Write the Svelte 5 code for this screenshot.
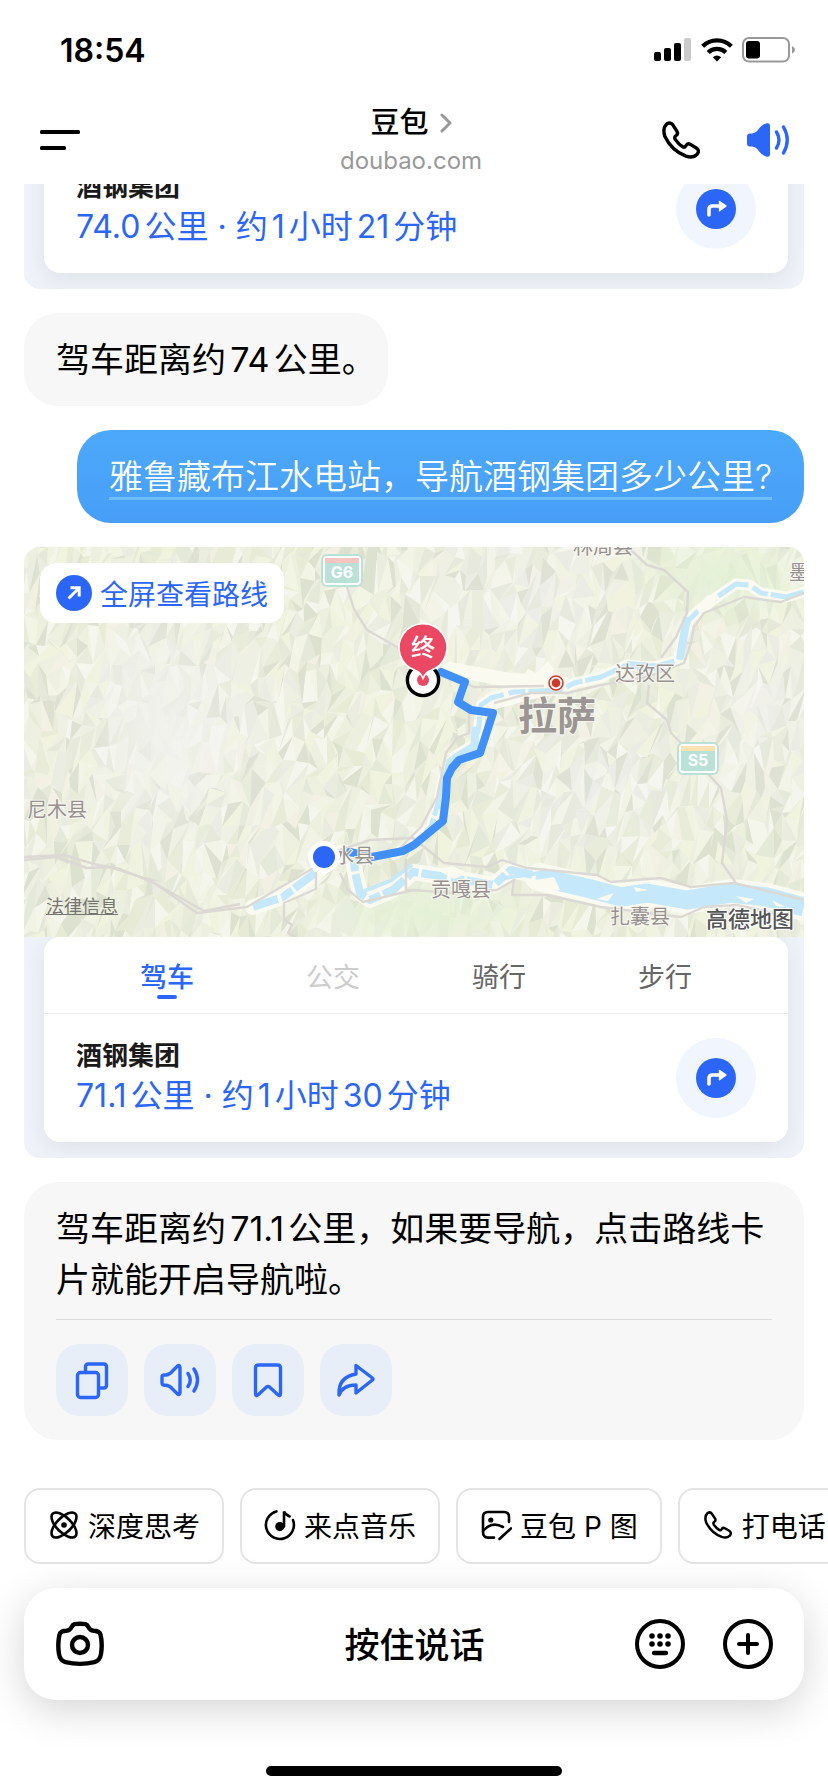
<script lang="ts">
  const tabs = [
    { name: '驾车', state: 'active' },
    { name: '公交', state: 'disabled' },
    { name: '骑行', state: '' },
    { name: '步行', state: '' },
  ];

  const chips = [
    { icon: 'atom', label: '深度思考' },
    { icon: 'music', label: '来点音乐' },
    { icon: 'photo', label: '豆包 P 图' },
    { icon: 'phone', label: '打电话' },
  ];

  const places = [
    { name: '林周县', x: 549, y: 7 },
    { name: '墨', x: 765, y: 33 },
    { name: '达孜区', x: 591, y: 134 },
    { name: '尼木县', x: 3, y: 270 },
    { name: '水县', x: 310, y: 316 },
    { name: '贡嘎县', x: 407, y: 350 },
    { name: '扎囊县', x: 586, y: 377 },
  ];

  const shields = [
    { code: 'G6', x: 297, y: 7, band: '#f6c5c1' },
    { code: 'S5', x: 653, y: 195, band: '#fae3b0' },
  ];

  const roads = [
    'M0 313L33 310L63 321L86 320L126 333L173 366L223 360L286 323L316 303L346 293L389 291L420 316L463 320L478 313L503 321L573 328L587 335L637 331L667 340L710 336L780 353',
    'M0 310L40 308L70 317L96 322L130 336L180 364L216 357',
    'M625 138L623 156L643 173L647 186L667 206L687 230L697 241L703 273L698 316L712 336',
    'M607 3L623 18L640 23L664 45L663 66L652 90L637 111',
    'M780 46L757 55L720 50L680 66L670 80L667 96L660 116L623 130L577 138L543 146L507 146L470 156',
    'M417 125L450 140L520 139',
    'M323 40L330 62L343 83L373 100L385 118',
    'M445 160L445 186L433 191L422 206L413 250L397 280L375 302',
    'M316 326L324 343L339 355L389 343L430 346L473 343L490 333L488 348L523 348L577 360L657 370L680 360L713 358L750 366',
    'M292 325L292 342L260 356L260 372L268 378L264 386L272 390',
    'M382 312L382 343L392 343',
  ];

  const lhasaRiver =
    'M780 45L762 50L737 46L725 38L712 37L693 50L673 65L665 73L657 96L655 113L630 120L603 118L577 130L550 136L537 143L490 145L467 151L457 158L455 178L452 196L430 210L420 230L415 253L407 280L390 296L370 308';
  const westRiver =
    'M229 360L259 350L275 338L291 326L316 306L329 306L331 325L336 346L346 353L369 343L389 325L423 330L470 338L487 323L523 331';
  const eastRiver = 'M515 330L563 341L597 350L623 346L663 353L707 346L743 350L780 360';

  // Relief: a jittered grid of facets, grouped by shade so each shade is one path
  const shades = ['#ffffff', '#f9faed', '#e0e6cc', '#dadfcf', '#c6cbba', '#f5f8dd', '#e6e8e4', '#fbf1e9'];

  function buildRelief() {
    let seed = 7;
    const rand = () => {
      seed = (seed * 16807) % 2147483647;
      return seed / 2147483647;
    };
    const cols = 88;
    const rows = 24;
    const pts: number[][][] = [];
    for (let r = 0; r <= rows; r++) {
      pts.push([]);
      for (let c = 0; c <= cols; c++) {
        const x = (c - 1) * 9.2 + (rand() - 0.5) * 11 + (r % 2) * 5;
        const y = (r - 1) * 18 + (rand() - 0.5) * 26;
        pts[r].push([Math.round(x), Math.round(y)]);
      }
    }
    const out = shades.map(() => '');
    for (let r = 0; r < rows; r++) {
      for (let c = 0; c < cols; c++) {
        const [a, b, d, e] = [pts[r][c], pts[r][c + 1], pts[r + 1][c], pts[r + 1][c + 1]];
        for (const tri of [[a, b, d], [b, e, d]]) {
          const roll = rand();
          if (roll < 0.2) continue;
          const idx = roll > 0.97 ? 7 : Math.floor(rand() * 7);
          out[idx] += `M${tri.map((p) => p.join(' ')).join('L')}Z`;
        }
      }
    }
    return out;
  }

  const relief = buildRelief();
</script>

{#snippet phoneIcon()}
  <svg class="phone" viewBox="0 0 38 38" fill="none" stroke="currentColor" stroke-width="3.4" stroke-linejoin="round" aria-hidden="true">
    <path d="M5 2.8Q8.5 .6 10.8 3.8L15 10.4Q16.4 12.8 14.2 14.4Q11.8 16 13.4 18.6Q16.4 23 21 26Q22.6 26.8 23.8 24.8Q25.6 21.8 28.4 23.4L34.6 27.2Q38 29.6 35 33.4Q31 37.6 24 35.2Q9.6 29.6 2.8 15.2Q.2 7 5 2.8Z" />
  </svg>
{/snippet}

{#snippet routeRow(distance: string, duration: string)}
  <div class="route-row">
    <div class="route-text">
      <strong>酒钢集团</strong>
      <span>{distance} · {duration}</span>
    </div>
    <button class="go" aria-label="开始导航">
      <svg viewBox="0 0 40 40" aria-hidden="true">
        <circle cx="20" cy="20" r="20" fill="#2b66f6" />
        <path d="M13 26V20.5Q13 17 16.5 17H24" fill="none" stroke="#fff" stroke-width="3.6" stroke-linecap="round" />
        <path d="M23.6 11.8L30.2 16.2Q31.2 17 30.2 17.8L23.6 22.4Q22.8 22.8 22.8 21.8V12.4Q22.8 11.4 23.6 11.8Z" fill="#fff" />
      </svg>
    </button>
  </div>
{/snippet}

<div class="screen">
  <div class="status-bar">
    <time>18:54</time>
    <div class="status-icons">
      <svg width="38" height="24" viewBox="0 0 38 24" aria-hidden="true">
        <rect x="0" y="14" width="7" height="9" rx="2" />
        <rect x="10" y="10" width="7" height="13" rx="2" />
        <rect x="20" y="5" width="7" height="18" rx="2" />
        <rect x="30" y="0" width="7" height="23" rx="2" fill="#cbcbcb" />
      </svg>
      <svg width="32" height="24" viewBox="0 0 32 24" fill="none" stroke="#000" stroke-width="4.2" aria-hidden="true">
        <path d="M1.6 8.3C9.6.3 22.4.3 30.4 8.3" />
        <path d="M7.2 14.4C12 9.6 20 9.6 24.8 14.4" />
        <path d="M16 23.4L11.8 19.2Q16 15.8 20.2 19.2Z" fill="#000" stroke="none" />
      </svg>
      <svg width="54" height="26" viewBox="0 0 54 26" aria-hidden="true">
        <rect x="1" y="1" width="46" height="23.6" rx="6" fill="none" stroke="#999" stroke-width="2" />
        <rect x="4" y="4" width="14" height="17.4" rx="3" />
        <path d="M50 9Q53 10.4 53 12.8T50 16.8Z" fill="#999" />
      </svg>
    </div>
  </div>

  <header>
    <button class="icon-btn" aria-label="菜单">
      <svg width="40" height="20" viewBox="0 0 40 20" aria-hidden="true">
        <rect width="40" height="4" rx="1.6" />
        <rect y="16" width="26" height="4" rx="1.6" />
      </svg>
    </button>
    <div class="title">
      <h1>
        豆包
        <svg width="12" height="20" viewBox="0 0 12 20" fill="none" stroke="#999" stroke-width="3" stroke-linecap="round" stroke-linejoin="round" aria-hidden="true">
          <path d="M2 2L10 10L2 18" />
        </svg>
      </h1>
      <p>doubao.com</p>
    </div>
    <div class="header-actions">
      <button class="icon-btn" aria-label="打电话">{@render phoneIcon()}</button>
      <button class="icon-btn speaker" aria-label="朗读">
        <svg width="44" height="36" viewBox="0 0 44 36" aria-hidden="true">
          <path d="M3.5 11.5H6Q10 11 13 6.5Q16 2.5 20 1.4Q24 .4 24 4V32Q24 35.6 20 34.4Q16 33 13 29.2Q10 25 6 24.6H3.5Q1 24.4 1 22V14Q1 11.6 3.5 11.5Z" fill="currentColor" />
          <path d="M30.5 10Q35.5 18 30.5 26M37.5 5Q45 18 37.5 31" fill="none" stroke="currentColor" stroke-width="3.4" stroke-linecap="round" />
        </svg>
      </button>
    </div>
  </header>

  <main>
    <section class="route">
      <div class="route-card">{@render routeRow('74.0公里', '约1小时21分钟')}</div>
    </section>

    <div class="bubble bot short"><p>驾车距离约74公里。</p></div>

    <div class="bubble user"><p>雅鲁藏布江水电站，导航酒钢集团多少公里?</p></div>

    <section class="route">
      <div class="map">
        <svg class="terrain" viewBox="0 0 780 390" preserveAspectRatio="xMidYMid slice" role="img" aria-label="路线地图">
          <defs>
            <radialGradient id="haze">
              <stop offset="0" stop-color="#f1f2ed" stop-opacity=".9" />
              <stop offset="1" stop-color="#f1f2ed" stop-opacity="0" />
            </radialGradient>
            <radialGradient id="meadow">
              <stop offset="0" stop-color="#e4f2d6" stop-opacity=".9" />
              <stop offset="1" stop-color="#e4f2d6" stop-opacity="0" />
            </radialGradient>
          </defs>
          <rect width="780" height="390" fill="#edf0de" />
          <ellipse cx="150" cy="190" rx="170" ry="190" fill="url(#haze)" />
          <ellipse cx="500" cy="50" rx="150" ry="100" fill="url(#haze)" />
          <ellipse cx="570" cy="245" rx="150" ry="100" fill="url(#haze)" />
          <ellipse cx="740" cy="170" rx="90" ry="120" fill="url(#haze)" />
          <g opacity=".4">
            {#each relief as d, i}
              <path {d} fill={shades[i]} />
            {/each}
          </g>
          <ellipse cx="140" cy="180" rx="80" ry="120" fill="url(#haze)" />
          <ellipse cx="700" cy="30" rx="100" ry="50" fill="url(#meadow)" />
          <ellipse cx="400" cy="365" rx="120" ry="40" fill="url(#meadow)" />

          <g fill="none" stroke="#fafaf0" stroke-linejoin="round" stroke-linecap="round">
            <path d={lhasaRiver} stroke-width="11" />
            <path d="M425 122L480 132L540 137L490 150L460 158" stroke-width="14" />
            <path d={westRiver} stroke-width="16" />
            <path d={eastRiver} stroke-width="28" />
          </g>
          <path d="M498 130L504 122L512 126L524 114L530 122L526 138H498Z" fill="#fafaf0" />
          <g fill="none" stroke="#c5e8fa" stroke-linejoin="round">
            <path d={lhasaRiver} stroke-width="5" stroke-dasharray="34 3 17 5" />
            <path d="M663 70L656 112M603 118L640 121M452 180L450 200L426 215L415 262" stroke-width="8" />
            <path d={westRiver} stroke-width="8" stroke-dasharray="26 4 13 3" />
            <path d={eastRiver} stroke-width="19" />
            <path d="M340 344L366 334L388 318M480 331L530 324M700 344L770 365" stroke-width="4" />
          </g>
          <g fill="#fafaf0">
            <path d="M670 62L684 48L694 50L686 64Z" />
            <path d="M412 322L428 319L444 326L430 332Z" />
            <path d="M505 334L530 330L536 343L520 346Z" />
            <path d="M572 352L590 346L584 354Z" />
            <path d="M712 349L730 352L722 356Z" />
            <path d="M610 340L624 343L612 345Z" />
            <path d="M748 353L762 360L752 359Z" />
          </g>

          <g fill="none" stroke="#dcd9d5" stroke-width="2.4" stroke-linejoin="round">
            {#each roads as d}
              <path {d} />
            {/each}
          </g>

          {#each shields as s}
            <rect x={s.x} y={s.y} width="42" height="33" rx="6" fill="#b9e1d6" />
            <rect x={s.x + 3} y={s.y + 3} width="36" height="27" rx="3" fill="none" stroke="#fff" stroke-width="2" />
            <rect x={s.x + 4} y={s.y + 4} width="34" height="5" fill={s.band} />
            <text class="code" x={s.x + 21} y={s.y + 24}>{s.code}</text>
          {/each}

          <path
            d="M417 125L441 135L434 155L447 163L469 166L456 206L435 213L428 221L423 231L422 250L419 274L390 298L379 304L348 310L326 305"
            fill="none"
            stroke="#4190f7"
            stroke-width="8"
            stroke-linejoin="round"
            stroke-linecap="round"
          />

          {#each places as p}
            <text class="place" x={p.x} y={p.y}>{p.name}</text>
          {/each}
          <text class="city" x="494" y="183">拉萨</text>
          <text class="brand" x="682" y="380">高德地图</text>

          <circle cx="532" cy="136" r="8" fill="#fff" />
          <circle cx="532" cy="136" r="7" fill="none" stroke="#cd3a2a" stroke-width="1.6" />
          <circle cx="532" cy="136" r="4.4" fill="#cd3a2a" />

          <circle cx="300" cy="310" r="16" fill="#fff" />
          <circle cx="300" cy="310" r="11" fill="#2b66f6" />

          <circle cx="399" cy="133" r="15.6" fill="#fff" stroke="#000" stroke-width="3.4" />
          <circle cx="399" cy="133" r="6" fill="#eb4864" />
          <path d="M391.5 123.5Q396 124.6 399 131.5Q402 124.6 406.5 123.5A24 24 0 1 0 391.5 123.5Z" fill="#eb4864" stroke="#fff" stroke-width="1.6" />
          <text class="end" x="399" y="109">终</text>
        </svg>
        <button class="fullscreen">
          <svg width="36" height="36" viewBox="0 0 36 36" aria-hidden="true">
            <circle cx="18" cy="18" r="18" fill="#2b66f6" />
            <path d="M12.5 23.5L23 13M14.5 12.8H23.2V21.6" fill="none" stroke="#fff" stroke-width="3" />
          </svg>
          全屏查看路线
        </button>
        <a class="legal" href="#legal">法律信息</a>
      </div>
      <div class="route-card">
        <nav>
          {#each tabs as tab}
            <button class="tab {tab.state}" disabled={tab.state === 'disabled'}>{tab.name}</button>
          {/each}
        </nav>
        {@render routeRow('71.1公里', '约1小时30分钟')}
      </div>
    </section>

    <div class="bubble bot">
      <p>驾车距离约71.1公里，如果要导航，点击路线卡片就能开启导航啦。</p>
      <div class="actions">
        <button aria-label="复制">
          <svg viewBox="0 0 40 40" aria-hidden="true">
            <path d="M13.5 12.5V7Q13.5 4 16.5 4H31.5Q34.5 4 34.5 7V25Q34.5 28 31.5 28H27.5" />
            <rect x="5.5" y="12.5" width="21" height="25" rx="3" />
          </svg>
        </button>
        <button aria-label="朗读">
          <svg viewBox="0 0 40 40" aria-hidden="true">
            <path d="M4.5 15H6Q10 14.4 13 10.4L17.6 6Q20 4.4 20 8V32Q20 35.6 17.6 34L13 29.6Q10 25.6 6 25.2H4.5Q2 25 2 23V17Q2 15 4.5 15Z" />
            <path d="M28 13.5Q32.5 20 28 26.5M34 9Q41 20 34 31" />
          </svg>
        </button>
        <button aria-label="收藏">
          <svg viewBox="0 0 40 40" aria-hidden="true">
            <path d="M7.5 33V8Q7.5 5 10.5 5H29.5Q32.5 5 32.5 8V33Q32.5 37 29.6 34.4L22 27.4Q20 25.8 18 27.4L10.4 34.4Q7.5 37 7.5 33Z" />
          </svg>
        </button>
        <button aria-label="分享">
          <svg viewBox="0 0 40 40" aria-hidden="true">
            <path d="M20 5.5L36.4 18Q37.6 19 36.4 20L20 33V25Q7 25 3 35Q2 17 20 14Z" />
          </svg>
        </button>
      </div>
    </div>
  </main>

  <div class="chips">
    {#each chips as chip}
      <button class="chip">
        {#if chip.icon === 'phone'}
          {@render phoneIcon()}
        {:else}
          <svg width="32" height="32" viewBox="0 0 32 32" fill="none" stroke="currentColor" stroke-width="2.6" stroke-linecap="round" aria-hidden="true">
            {#if chip.icon === 'atom'}
              <ellipse cx="16" cy="16" rx="16" ry="7.4" transform="rotate(45 16 16)" />
              <ellipse cx="16" cy="16" rx="16" ry="7.4" transform="rotate(-45 16 16)" />
              <circle cx="16" cy="16" r="2.8" fill="currentColor" stroke="none" />
            {:else if chip.icon === 'music'}
              <path d="M12.4 2.4A14 14 0 1 0 29 11" />
              <path d="M20 17.5V2.6Q21.4 6 25.6 7.4" />
              <circle cx="15.8" cy="17.6" r="4.6" fill="currentColor" stroke="none" />
            {:else}
              <path d="M29 13V8Q29 3 24 3H8Q3 3 3 8V23Q3 28.6 8 28.6H14" />
              <path d="M4 21Q12 12 23 18M19.5 30L31 19.4" />
              <circle cx="10.8" cy="11" r="2.6" fill="currentColor" stroke="none" />
            {/if}
          </svg>
        {/if}
        {chip.label}
      </button>
    {/each}
  </div>

  <footer>
    <button class="icon-btn" aria-label="拍照">
      <svg width="48" height="46" viewBox="0 0 48 46" fill="none" stroke="#000" stroke-width="4.4" aria-hidden="true">
        <path d="M18.5 3.2Q24 2.2 29.5 3.2Q31.4 3.8 32.6 6.4Q34 9.4 37.6 9.8Q43.6 9.8 44.6 14Q46.6 23 45 33Q44 39.4 38.4 41.2Q24 44.6 9.6 41.2Q4 39.4 3 33Q1.4 23 3.4 14Q4.4 9.8 10.4 9.8Q14 9.4 15.4 6.4Q16.6 3.8 18.5 3.2Z" />
        <circle cx="24" cy="24" r="8" />
      </svg>
    </button>
    <button class="talk">按住说话</button>
    <div class="footer-actions">
      <button class="icon-btn" aria-label="键盘">
        <svg width="50" height="50" viewBox="0 0 50 50" aria-hidden="true">
          <circle cx="25" cy="25" r="23" fill="none" stroke="#000" stroke-width="4" />
          {#each [17, 25, 33] as x}
            <circle cx={x} cy="17" r="2.8" />
            <circle cx={x} cy="25" r="2.8" />
          {/each}
          <path d="M19 34H31" stroke="#000" stroke-width="4.4" stroke-linecap="round" />
        </svg>
      </button>
      <button class="icon-btn" aria-label="更多">
        <svg width="50" height="50" viewBox="0 0 50 50" fill="none" stroke="#000" stroke-width="4" stroke-linecap="round" aria-hidden="true">
          <circle cx="25" cy="25" r="23" />
          <path d="M16 25H34M25 16V34" />
        </svg>
      </button>
    </div>
  </footer>
  <div class="home-indicator"></div>
</div>

<style>
  :global(body) {
    margin: 0;
    background: #fff;
  }

  .screen {
    display: flex;
    flex-direction: column;
    height: 100vh;
    overflow: hidden;
    font-family: Inter, 'Noto Sans CJK SC', sans-serif;
    color: #000;
    background: #fff;
    text-autospace: normal;
  }

  button {
    padding: 0;
    border: 0;
    background: none;
    font: inherit;
    color: inherit;
  }

  p,
  h1 {
    margin: 0;
  }

  svg {
    display: block;
    flex: none;
  }

  .icon-btn {
    display: flex;
    align-items: center;
    justify-content: center;
  }

  .status-bar {
    display: flex;
    align-items: center;
    justify-content: space-between;
    flex: none;
    height: 96px;
    padding: 4px 32px 0 60px;
    box-sizing: border-box;
  }

  .status-bar time {
    font-size: 32px;
    font-weight: 600;
  }

  .status-icons {
    display: flex;
    align-items: center;
    gap: 9px;
  }

  header {
    display: grid;
    grid-template-columns: 1fr auto 1fr;
    align-items: center;
    flex: none;
    height: 88px;
    padding: 0 38px 0 40px;
  }

  header > .icon-btn {
    justify-self: start;
  }

  .title {
    padding-right: 8px;
    text-align: center;
  }

  .title h1 {
    display: flex;
    align-items: center;
    justify-content: center;
    gap: 11px;
    font-size: 29px;
    line-height: 42px;
    font-weight: 500;
  }

  .title p {
    font-size: 24px;
    line-height: 34px;
    color: #999;
  }

  .header-actions {
    display: flex;
    align-items: center;
    justify-content: flex-end;
    gap: 46px;
  }

  .header-actions .phone {
    width: 38px;
    height: 38px;
  }

  .speaker {
    color: #2b66f6;
  }

  /* Newest message sits at the bottom, older ones slide under the header */
  main {
    display: flex;
    flex-direction: column;
    justify-content: flex-end;
    flex: 1;
    min-height: 0;
    gap: 24px;
    padding: 0 24px;
    overflow: hidden;
  }

  .bubble {
    flex: none;
    padding: 21px 32px;
    border-radius: 34px;
    font-size: 34px;
    line-height: 51px;
  }

  .bot {
    background: #f7f7f7;
  }

  .short {
    align-self: flex-start;
    padding-right: 12px;
  }

  .user {
    align-self: flex-end;
    color: #fff;
    font-weight: 350;
    background: linear-gradient(#4ca9fa, #489ef7);
    text-decoration: underline 3px #6fbcfa;
    text-decoration-skip-ink: none;
    text-underline-offset: 8px;
  }

  .route {
    flex: none;
    border-radius: 16px;
    background: #eff2f9;
    overflow: hidden;
  }

  .map {
    position: relative;
    height: 390px;
  }

  .terrain {
    width: 100%;
    height: 100%;
  }

  .place {
    font-size: 20px;
    fill: #96918e;
    stroke: #f7f7f0;
    stroke-width: 2px;
    paint-order: stroke;
  }

  .city {
    font-size: 39px;
    font-weight: 700;
    fill: #9b9693;
    stroke: #f7f7f0;
    stroke-width: 2px;
    paint-order: stroke;
  }

  .brand {
    font-size: 22px;
    font-weight: 500;
    fill: #555;
    stroke: #fff;
    stroke-width: 2px;
    paint-order: stroke;
  }

  .code {
    font-size: 16px;
    font-weight: 700;
    fill: #fff;
    text-anchor: middle;
  }

  .end {
    font-size: 24px;
    font-weight: 500;
    fill: #fff;
    text-anchor: middle;
  }

  .fullscreen {
    position: absolute;
    top: 16px;
    left: 16px;
    display: flex;
    align-items: center;
    gap: 8px;
    height: 60px;
    padding: 0 16px;
    border-radius: 16px;
    background: #fff;
    font-size: 28px;
    color: #2b66f6;
  }

  .legal {
    position: absolute;
    left: 22px;
    bottom: 18px;
    font-size: 18px;
    line-height: 24px;
    color: #757570;
  }

  .route-card {
    margin: 0 16px 16px 20px;
    border-radius: 16px;
    background: #fff;
    box-shadow: 0 6px 24px rgba(0, 0, 0, 0.07);
  }

  nav {
    display: grid;
    grid-template-columns: repeat(4, 1fr);
    height: 76px;
    padding: 0 40px;
    border-bottom: 1px solid #ececec;
  }

  .tab {
    position: relative;
    font-size: 27px;
    color: #666;
  }

  .tab.disabled {
    color: #ccc;
  }

  .tab.active {
    font-weight: 500;
    color: #2b66f6;
  }

  .tab.active::after {
    content: '';
    position: absolute;
    left: 50%;
    bottom: 14px;
    width: 20px;
    height: 4px;
    margin-left: -10px;
    border-radius: 2px;
    background: #2b66f6;
  }

  .route-row {
    display: flex;
    align-items: center;
    justify-content: space-between;
    height: 128px;
    padding: 0 32px;
  }

  .route-text {
    display: flex;
    flex-direction: column;
  }

  .route-text strong {
    font-size: 26px;
    line-height: 36px;
    font-weight: 700;
    color: #1a1a1a;
  }

  .route-text span {
    font-size: 32px;
    line-height: 44px;
    color: #2b66f6;
  }

  .go {
    display: flex;
    align-items: center;
    justify-content: center;
    width: 80px;
    height: 80px;
    border-radius: 50%;
    background: #f0f5fe;
  }

  .go svg {
    width: 40px;
    height: 40px;
  }

  .actions {
    display: flex;
    gap: 16px;
    margin-top: 14px;
    padding: 24px 0 3px;
    border-top: 1px solid #dcdcdc;
  }

  .actions button {
    display: flex;
    align-items: center;
    justify-content: center;
    width: 72px;
    height: 72px;
    border-radius: 24px;
    background: #e7eef7;
  }

  .actions svg {
    width: 40px;
    height: 40px;
    fill: none;
    stroke: #2b66f6;
    stroke-width: 3.4px;
    stroke-linecap: round;
    stroke-linejoin: round;
  }

  .chips {
    display: flex;
    flex: none;
    gap: 16px;
    padding: 48px 0 24px 24px;
    overflow: hidden;
  }

  .chip {
    display: flex;
    align-items: center;
    flex: none;
    gap: 8px;
    height: 76px;
    padding: 0 22px 2px;
    border: 2px solid #e4e4e4;
    border-radius: 16px;
    font-size: 28px;
    white-space: nowrap;
  }

  .chip svg {
    width: 32px;
    height: 32px;
  }

  .chip .phone {
    width: 28px;
    height: 28px;
    margin: 0 2px;
  }

  footer {
    display: grid;
    grid-template-columns: 1fr auto 1fr;
    align-items: center;
    flex: none;
    height: 112px;
    margin: 0 24px;
    padding: 0 31px 0 32px;
    border-radius: 32px;
    background: #fff;
    box-shadow: 0 10px 40px rgba(0, 0, 0, 0.17);
  }

  footer > .icon-btn {
    justify-self: start;
  }

  .talk {
    padding-bottom: 4px;
    font-size: 35px;
    font-weight: 500;
  }

  .footer-actions {
    display: flex;
    justify-content: flex-end;
    gap: 38px;
  }

  .home-indicator {
    flex: none;
    width: 296px;
    height: 10px;
    margin: 66px auto 16px;
    border-radius: 5px;
    background: #000;
  }
</style>
